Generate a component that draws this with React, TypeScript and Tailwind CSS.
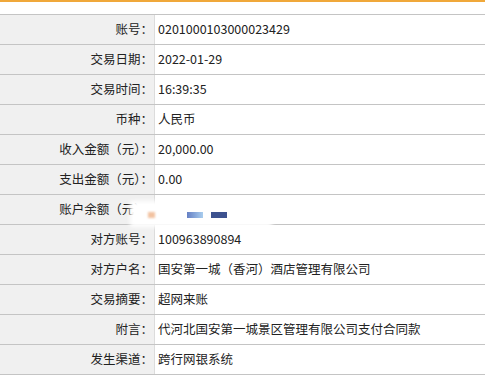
import React from 'react';

const rows: [string, string][] = [
    ['账号：', '0201000103000023429'],
    ['交易日期：', '2022-01-29'],
    ['交易时间：', '16:39:35'],
    ['币种：', '人民币'],
    ['收入金额（元）：', '20,000.00'],
    ['支出金额（元）：', '0.00'],
    ['账户余额（元）：', ''],
    ['对方账号：', '100963890894'],
    ['对方户名：', '国安第一城（香河）酒店管理有限公司'],
    ['交易摘要：', '超网来账'],
    ['附言：', '代河北国安第一城景区管理有限公司支付合同款'],
    ['发生渠道：', '跨行网银系统'],
];

const App: React.FC = () => {
    return (
        <div
            className="w-[485px] h-[383px] bg-white overflow-hidden text-[12.5px] text-[#222]"
            style={{ fontFamily: '"Noto Sans CJK SC", "Noto Sans", sans-serif' }}
        >
            <div className="h-[2px] bg-[#f0a83a]" />
            <div className="h-[12px]" />
            <div className="relative border-t border-[#c4c4c4]">
                {rows.map(([label, value], i) => (
                    <div key={i} className="flex h-[30px] border-b border-[#c4c4c4]">
                        <div className="w-[155px] shrink-0 bg-[#f0f0f0] border-r border-[#dcdcdc] flex items-center justify-end pr-[1px] whitespace-nowrap">
                            {label}
                        </div>
                        <div className="flex-1 flex items-center pl-[3px] whitespace-nowrap">{value}</div>
                    </div>
                ))}
                {/* blurred patch over the balance */}
                <div className="absolute left-[130px] top-[186px] w-[142px] h-[26px] bg-white blur-[2px]" />
                <div className="absolute left-[148px] top-[197px] w-[7px] h-[6px] bg-[#f2c2a0] blur-[1px]" />
                <div className="absolute left-[187px] top-[197px] w-[16px] h-[6px] bg-gradient-to-r from-[#6680c4] to-[#a9cdee] blur-[0.5px]" />
                <div className="absolute left-[211px] top-[197px] w-[16px] h-[6px] bg-[#3d528f] blur-[0.5px]" />
            </div>
        </div>
    );
};

export default App;
